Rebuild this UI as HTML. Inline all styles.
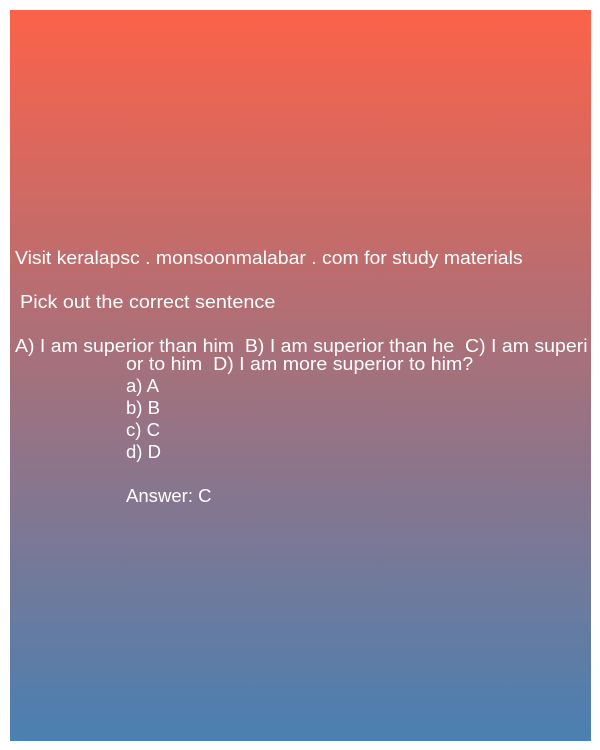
<!DOCTYPE html>
<html><head><style>
html,body{margin:0;padding:0;background:#fff;width:600px;height:750px;overflow:hidden}
.box{position:absolute;left:10px;top:10px;width:581px;height:731px;background:linear-gradient(#fc6249,#4a80b2)}
.t{position:absolute;color:#fff;font-family:"Liberation Sans",sans-serif;font-size:18px;line-height:22px;white-space:pre;transform-origin:left center;transform:scaleX(1.03)}
</style></head><body>
<div class="box"></div>
<div class="t" style="left:15px;top:247px;transform:scaleX(1.078)">Visit keralapsc . monsoonmalabar . com for study materials</div>
<div class="t" style="left:20px;top:291px;transform:scaleX(1.1)">Pick out the correct sentence</div>
<div class="t" style="left:15px;top:335px;transform:scaleX(1.084)">A) I am superior than him  B) I am superior than he  C) I am superi</div>
<div class="t" style="left:126px;top:353px;transform:scaleX(1.088)">or to him  D) I am more superior to him?</div>
<div class="t" style="left:126px;top:375px">a) A</div>
<div class="t" style="left:126px;top:397px">b) B</div>
<div class="t" style="left:126px;top:419px">c) C</div>
<div class="t" style="left:126px;top:441px">d) D</div>
<div class="t" style="left:126px;top:485px">Answer: C</div>
</body></html>
